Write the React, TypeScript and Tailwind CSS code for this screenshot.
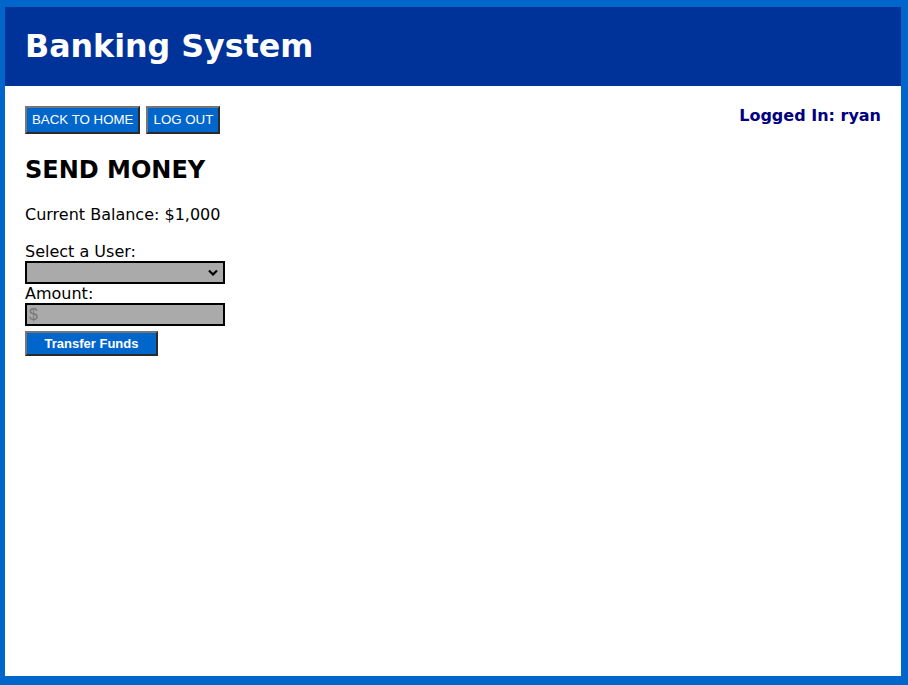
export default function App() {
  const btn =
    "bg-[#0066cc] text-white text-[13.3px] px-[5px] h-[28px] border-2 border-t-[#767676] border-l-[#767676] border-b-[#2a2a2a] border-r-[#2a2a2a] leading-none";
  return (
    <div
      className="h-[685px] w-[908px] bg-[#0066cc] pt-[7px] pl-[5px] pr-[7px] pb-[9px] flex flex-col"
      style={{ fontFamily: '"DejaVu Sans", Verdana, sans-serif' }}
    >
      <div className="bg-[#003399] h-[79px] flex items-center pl-[20px]">
        <h1 className="text-white text-[31.7px] font-bold leading-none">Banking System</h1>
      </div>
      <div className="bg-white flex-1 px-[20px] pt-[20px]">
        <div className="flex justify-between items-start">
          <div className="flex gap-[6px]" style={{ fontFamily: '"Liberation Sans", Arial, sans-serif' }}>
            <button className={btn}>BACK TO HOME</button>
            <button className={btn}>LOG OUT</button>
          </div>
          <div className="text-[#000080] font-bold text-[16px] leading-[20px]">Logged In: ryan</div>
        </div>
        <h2 className="text-black font-bold text-[24px] leading-[28px] mt-[22px]">SEND MONEY</h2>
        <p className="text-black text-[16px] leading-[20px] mt-[21px]">Current Balance: $1,000</p>
        <div className="mt-[18px] flex flex-col items-start text-[16px] leading-[18px] text-black">
          <label>Select a User:</label>
          <div className="relative w-[200px] h-[23px] border-2 border-black bg-[#aaaaaa]">
            <svg className="absolute right-[5px] top-[6px]" width="10" height="7" viewBox="0 0 10 7">
              <path d="M1 1.5 L5 5.5 L9 1.5" stroke="black" strokeWidth="2.2" fill="none" />
            </svg>
          </div>
          <label className="mt-[1px]">Amount:</label>
          <div
            className="w-[200px] h-[23px] border-2 border-black bg-[#aaaaaa] text-[#777] text-[16px] leading-[19px] pl-[2px]"
            style={{ fontFamily: '"Liberation Sans", Arial, sans-serif' }}
          >
            $
          </div>
          <button
            className="mt-[5px] w-[133px] h-[25px] bg-[#0066cc] text-white text-[13px] font-bold border-2 border-t-[#767676] border-l-[#767676] border-b-[#2a2a2a] border-r-[#2a2a2a] leading-none"
            style={{ fontFamily: '"Liberation Sans", Arial, sans-serif' }}
          >
            Transfer Funds
          </button>
        </div>
      </div>
    </div>
  );
}
